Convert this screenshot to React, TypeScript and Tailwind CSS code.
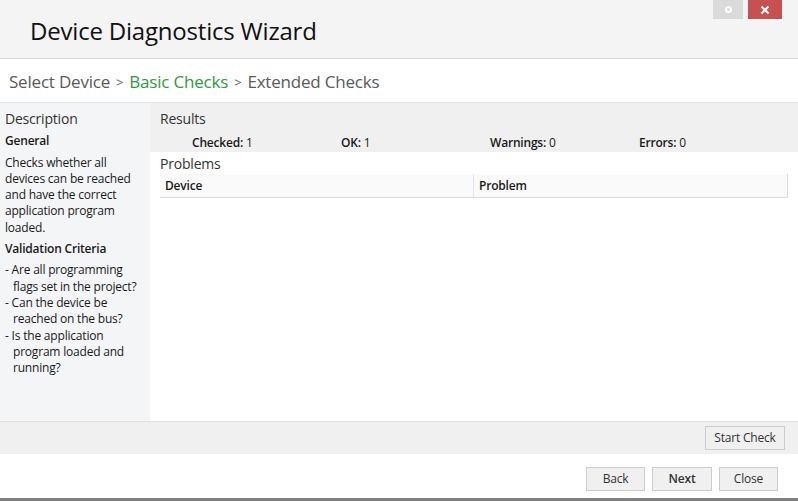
import React from 'react';

const font = { fontFamily: '"Open Sans", "Noto Sans", sans-serif' };

function Stat({ label, value }: { label: string; value: number }) {
  return (
    <div className="w-[149px] text-[12px] text-[#1a1a1a]">
      <span className="font-semibold">{label}:</span> {value}
    </div>
  );
}

function Button({ children, bold }: { children: React.ReactNode; bold?: boolean }) {
  return (
    <button
      className={
        'h-[24px] border border-[#cccccc] bg-[#f0f0f0] text-[12px] text-[#333] ' +
        (bold ? 'font-semibold text-[#1a1a1a]' : '')
      }
    >
      {children}
    </button>
  );
}

export default function App() {
  const criteria = [
    'Are all programming flags set in the project?',
    'Can the device be reached on the bus?',
    'Is the application program loaded and running?',
  ];

  return (
    <div className="w-[798px] h-[501px] flex flex-col bg-white overflow-hidden tracking-[-0.2px]" style={font}>
      {/* Title bar */}
      <div className="relative h-[59px] shrink-0 bg-[#f4f4f4] border-b border-[#d6d6d6] flex items-center pl-[30px]">
        <h1 className="text-[24px] text-[#111] leading-none pt-[3px]">Device Diagnostics Wizard</h1>
        <div className="absolute top-0 right-[16px] flex gap-[5px]">
          <div className="w-[30px] h-[19px] bg-[#dadada] flex items-center justify-center">
            <span className="w-[7px] h-[7px] rounded-full border-[2px] border-white" />
          </div>
          <div className="w-[34px] h-[19px] bg-[#c75050] flex items-center justify-center">
            <svg width="10" height="10" viewBox="0 0 10 10">
              <path d="M1.5 1.5 L8.5 8.5 M8.5 1.5 L1.5 8.5" stroke="white" strokeWidth="2" />
            </svg>
          </div>
        </div>
      </div>

      {/* Breadcrumb */}
      <div className="h-[44px] shrink-0 flex items-center pl-[9px] pt-[2px] text-[17px] text-[#5a5a5a] border-b border-[#e3e3e3]">
        <span>Select Device</span>
        <span className="mx-[6px] text-[13px] pt-[3px]">&gt;</span>
        <span className="text-[#2f9a3f]">Basic Checks</span>
        <span className="mx-[6px] text-[13px] pt-[3px]">&gt;</span>
        <span>Extended Checks</span>
      </div>

      {/* Main */}
      <div className="flex flex-1 min-h-0">
        <div className="w-[150px] shrink-0 bg-[#f4f5f7] pl-[5px] pr-[6px] pt-[8px] text-[12px] leading-[16.3px] text-[#1a1a1a]">
          <div className="text-[14px] text-[#333] mb-[6px]">Description</div>
          <div className="font-semibold mb-[5px]">General</div>
          <p className="mb-[5px]">Checks whether all devices can be reached and have the correct application program loaded.</p>
          <div className="font-semibold mb-[5px]">Validation Criteria</div>
          <ul>
            {criteria.map((c) => (
              <li key={c} className="pl-[8px] -indent-[8px]">- {c}</li>
            ))}
          </ul>
        </div>

        <div className="flex-1 flex flex-col">
          <div className="h-[49px] bg-[#f0f0f0] pl-[10px] pt-[8px]">
            <div className="text-[14px] text-[#333] leading-[16px]">Results</div>
            <div className="flex pl-[32px] mt-[7px]">
              <Stat label="Checked" value={1} />
              <Stat label="OK" value={1} />
              <Stat label="Warnings" value={0} />
              <Stat label="Errors" value={0} />
            </div>
          </div>
          <div className="pl-[10px] pr-[10px] pt-[3px]">
            <div className="text-[14px] text-[#333] leading-[18px] mb-[1px]">Problems</div>
            <div className="flex h-[24px] bg-[#fafafa] border-b border-r border-[#dcdcdc] text-[12px] font-semibold text-[#1a1a1a]">
              <div className="w-[314px] border-r border-[#e3e3e3] pl-[5px] flex items-center">Device</div>
              <div className="flex-1 pl-[5px] flex items-center">Problem</div>
            </div>
          </div>
        </div>
      </div>

      {/* Check bar */}
      <div className="h-[33px] shrink-0 bg-[#f0f0f0] border-t border-[#e0e0e0] flex items-center justify-end pr-[13px]">
        <div className="w-[80px] flex">
          <button className="w-full h-[24px] border border-[#cccccc] bg-[#f0f0f0] text-[12px] text-[#333]">Start Check</button>
        </div>
      </div>

      {/* Footer */}
      <div className="h-[44px] shrink-0 flex items-center justify-end gap-[7px] pr-[20px] pt-[6px]">
        <div className="w-[59px] flex flex-col"><Button>Back</Button></div>
        <div className="w-[60px] flex flex-col"><Button bold>Next</Button></div>
        <div className="w-[59px] flex flex-col"><Button>Close</Button></div>
      </div>
      <div className="h-[3px] shrink-0 bg-[#808080]" />
    </div>
  );
}
